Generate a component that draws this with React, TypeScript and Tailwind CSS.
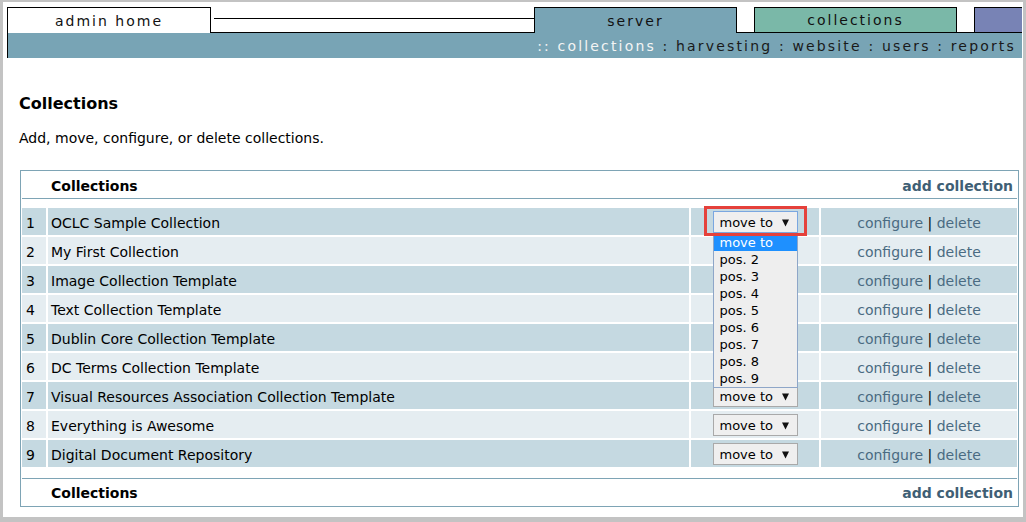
import React from "react";

const rows = [
  "OCLC Sample Collection",
  "My First Collection",
  "Image Collection Template",
  "Text Collection Template",
  "Dublin Core Collection Template",
  "DC Terms Collection Template",
  "Visual Resources Association Collection Template",
  "Everything is Awesome",
  "Digital Document Repository",
];

function Arrow() {
  return (
    <svg width="7" height="8" viewBox="0 0 7 8" className="ml-auto mr-[8px]">
      <polygon points="0,0.5 7,0.5 3.5,7.5" fill="#111" />
    </svg>
  );
}

function Select({ open }: { open?: boolean }) {
  return (
    <div
      className={
        open
          ? "relative w-[85px] h-[22px] bg-[#efefef] border border-[#7aa7e0] text-[13px] leading-none flex items-center pl-[6px] pt-[1px]"
          : "relative w-[85px] h-[22px] bg-[#efefef] border border-[#a9a9a9] text-[13px] leading-none flex items-center pl-[6px] pt-[1px]"
      }
    >
      <span>move to</span>
      <Arrow />
      {open && (
        <>
          <div className="absolute left-[-1px] top-[21px] w-[85px] border border-[#8ea6c8] bg-[#eeeeee] z-10 text-[13px] leading-none">
            <div className="h-[17px] bg-[#1e90ff] text-white flex items-center pl-[6px]">move to</div>
            {[2, 3, 4, 5, 6, 7, 8, 9].map((n) => (
              <div key={n} className="h-[17px] flex items-center pl-[6px] text-black">
                pos. {n}
              </div>
            ))}
          </div>
          <div className="absolute left-[-10px] top-[-6px] w-[103px] h-[30px] border-[3px] border-[#e5413b] z-20" />
        </>
      )}
    </div>
  );
}

export default function App() {
  return (
    <div className="w-[1026px] h-[522px] bg-[#c3c3c3] pt-[2px] pl-[3px] pr-[3px] pb-[5px] font-['DejaVu_Sans',Verdana,sans-serif] text-black overflow-hidden">
      <div className="h-full bg-white">
        {/* header */}
        <div className="ml-[4px] pt-[5px]">
          <div className="flex h-[26px] text-[14px] tracking-[2px] leading-none text-[#111]">
            <div className="w-[204px] border-l border-t border-r border-black bg-white flex items-center justify-center">
              admin home
            </div>
            <div className="w-[323px] border-b border-black pl-[3px] pt-[11px]">
              <div className="border-t border-black" />
            </div>
            <div className="w-[203px] border-l border-t border-r border-black bg-[#78a4b5] flex items-center justify-center">
              server
            </div>
            <div className="w-[17px] border-b border-black" />
            <div className="w-[203px] border border-black bg-[#7ab8a8] flex items-center justify-center">
              collections
            </div>
            <div className="w-[17px] border-b border-black" />
            <div className="w-[48px] border-l border-t border-b border-black bg-[#7883b5]" />
          </div>
          <div className="w-[1015px] h-[25px] border-l border-black bg-[#78a4b5] flex items-center justify-end pr-[6px] pt-[1px] text-[14px] tracking-[2.17px] leading-none">
            <span className="text-[#f4f4f4]">:: collections</span>
            <span className="text-[#1a1a1a] whitespace-pre"> : harvesting : website : users : reports</span>
          </div>
        </div>

        {/* content */}
        <div className="pl-[16px]">
          <div className="mt-[36px] text-[16px] font-bold leading-[20px]">Collections</div>
          <div className="mt-[15px] text-[14px] leading-[18px]">Add, move, configure, or delete collections.</div>

          <div className="mt-[23px] ml-[1px] w-[999px] border border-[#7ea4b5] p-[1px] text-[14px] leading-none">
            <div className="h-[27px] border-b border-[#7ea4b5] flex items-center pt-[1px]">
              <div className="w-[26px]" />
              <div className="pl-[3px] font-bold flex-1">Collections</div>
              <div className="pr-[4px] font-bold text-[#3f5f75]">add collection</div>
            </div>

            <div className="mt-[9px] flex flex-col gap-[2px]">
              {rows.map((name, i) => {
                const bg = i % 2 === 0 ? "bg-[#c5d9e1]" : "bg-[#e5edf1]";
                const showSelect = i === 0 || i >= 6;
                return (
                  <div key={i} className="grid grid-cols-[24px_641px_128px_196px] gap-x-[2px] h-[27px]">
                    <div className={`${bg} pl-[4px] pt-[2px] flex items-center`}>{i + 1}</div>
                    <div className={`${bg} pl-[3px] pt-[2px] flex items-center`}>{name}</div>
                    <div className={`${bg} flex items-center justify-center pt-[1px]`}>
                      {showSelect && <Select open={i === 0} />}
                    </div>
                    <div className={`${bg} flex items-center justify-center whitespace-pre pt-[2px]`}>
                      <span className="text-[#4a6b82]">configure</span>
                      <span> | </span>
                      <span className="text-[#4a6b82]">delete</span>
                    </div>
                  </div>
                );
              })}
            </div>

            <div className="mt-[11px] h-[27px] border-t border-[#7ea4b5] flex items-center pt-[1px]">
              <div className="w-[26px]" />
              <div className="pl-[3px] font-bold flex-1">Collections</div>
              <div className="pr-[4px] font-bold text-[#3f5f75]">add collection</div>
            </div>
          </div>
        </div>
      </div>
    </div>
  );
}
